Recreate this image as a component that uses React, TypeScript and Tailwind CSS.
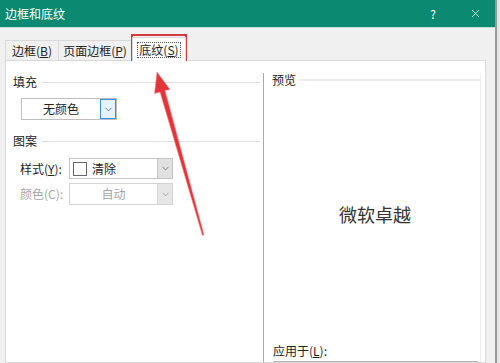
import { ChevronDown, X } from 'lucide-react'

const font = "font-['Noto_Sans_CJK_SC','Microsoft_YaHei',sans-serif]"

function Caret({ muted }: { muted?: boolean }) {
  return (
    <ChevronDown
      size={11}
      strokeWidth={1.5}
      className={muted ? 'text-[#8c8c8c]' : 'text-[#555]'}
    />
  )
}

function GroupTitle({ label }: { label: string }) {
  return (
    <div className="flex h-[14px] items-center gap-[5px]">
      <span className="text-[12px] leading-none text-[#222]">{label}</span>
      <div className="h-px flex-1 bg-[#dddddd]" />
    </div>
  )
}

export default function App() {
  return (
    <div className={`relative flex h-[363px] w-[500px] overflow-hidden bg-[#e6e6e6] ${font}`}>
      {/* Dialog */}
      <div className="flex w-[497px] shrink-0 flex-col border-r-2 border-[#9a9a9a]">
        {/* Title bar */}
        <div className="flex h-[28px] shrink-0 items-center border-b border-[#bfe3dc] bg-[#0b8a71] pl-[5px] pr-[13px] text-white">
          <span className="text-[12px] leading-none">边框和底纹</span>
          <div className="flex-1" />
          <span className="mr-[33px] text-[12px] leading-none">?</span>
          <X size={13} strokeWidth={1.3} />
        </div>

        {/* Body */}
        <div className="flex flex-1 flex-col bg-[#f0f0f0] pl-[5px] pr-[9px]">
          {/* Tabs */}
          <div className="flex h-[32px] shrink-0 items-end">
            <div className="flex h-[20px] w-[53px] items-center justify-center border-l border-t border-[#d9d9d9] text-[12px] text-[#222]">
              边框(<span className="underline">B</span>)
            </div>
            <div className="flex h-[20px] w-[74px] items-center justify-center border-l border-r border-t border-[#d9d9d9] text-[12px] text-[#222]">
              页面边框(<span className="underline">P</span>)
            </div>
            <div className="relative z-10 -mb-px flex h-[24px] w-[54px] items-center justify-center border-l border-r border-t border-[#d9d9d9] bg-white text-[12px] text-[#222]">
              <span className="border border-dotted border-[#555] px-px leading-[14px]">
                底纹(<span className="underline">S</span>)
              </span>
            </div>
          </div>

          {/* Panel */}
          <div className="flex flex-1 border border-[#d9d9d9] bg-white">
            {/* Left column */}
            <div className="flex w-[257px] shrink-0 flex-col pl-[7px] pr-[3px] pt-[14px]">
              <GroupTitle label="填充" />
              <div className="ml-[8px] mt-[9px] flex h-[22px] w-[96px] border border-[#bdbdbd]">
                <div className="flex flex-1 items-center justify-center text-[12px] text-[#222]">无颜色</div>
                <div className="flex w-[16px] items-center justify-center border border-[#3a8ee0] bg-[#e5f1fb]">
                  <Caret />
                </div>
              </div>

              <div className="mt-[14px]">
                <GroupTitle label="图案" />
              </div>

              <div className="ml-[7px] mt-[10px] flex items-center">
                <span className="w-[49px] text-[12px] text-[#222]">
                  样式(<span className="underline">Y</span>):
                </span>
                <div className="flex h-[21px] w-[104px] border border-[#c4c4c4]">
                  <div className="flex flex-1 items-center pl-[3px]">
                    <div className="h-[14px] w-[14px] border border-[#666]" />
                    <span className="ml-[5px] text-[12px] text-[#222]">清除</span>
                  </div>
                  <div className="flex w-[15px] items-center justify-center border-l border-[#c4c4c4] bg-[#e1e1e1]">
                    <Caret />
                  </div>
                </div>
              </div>

              <div className="ml-[7px] mt-[4px] flex items-center">
                <span className="w-[49px] text-[12px] text-[#a6a6a6]">颜色(C):</span>
                <div className="flex h-[22px] w-[104px] border border-[#d4d4d4]">
                  <div className="flex flex-1 items-center justify-center text-[12px] text-[#a6a6a6]">自动</div>
                  <div className="flex w-[15px] items-center justify-center border-l border-[#d4d4d4] bg-[#e6e6e6]">
                    <Caret muted />
                  </div>
                </div>
              </div>
            </div>

            {/* Preview */}
            <div className="mt-[12px] flex w-[218px] shrink-0 flex-col border-l border-r border-l-[#a8a8a8] border-r-[#eeeeee]">
              <div className="flex h-[14px] items-center gap-[3px] pl-[8px]">
                <span className="text-[12px] leading-none text-[#222]">预览</span>
                <div className="h-[2px] flex-1 bg-[#ececec]" />
              </div>
              <div className="flex h-[258px] justify-center pl-[6px] pt-[114px] text-[18px] leading-[26px] text-[#333]">
                微软卓越
              </div>
              <div className="pl-[9px] text-[12px] leading-none text-[#222]">
                应用于(<span className="underline">L</span>):
              </div>
              <div className="ml-[9px] mr-[2px] mt-[4px] h-px bg-[#b5b5b5]" />
            </div>
          </div>
        </div>
      </div>

      {/* Annotation: red box around the tab */}
      <div className="pointer-events-none absolute left-[131px] top-[34px] h-[27px] w-[56px] border-2 border-[#d23a3e]" />

      {/* Annotation: red arrow */}
      <svg className="pointer-events-none absolute left-0 top-0" width="500" height="363" viewBox="0 0 500 363">
        <polygon
          points="157,72 170,89.5 165,90.5 204,235 202.4,235.3 160,92 154.5,93.5"
          fill="#e3343a"
          stroke="#f28a8c"
          strokeWidth="0.6"
        />
      </svg>
    </div>
  )
}
